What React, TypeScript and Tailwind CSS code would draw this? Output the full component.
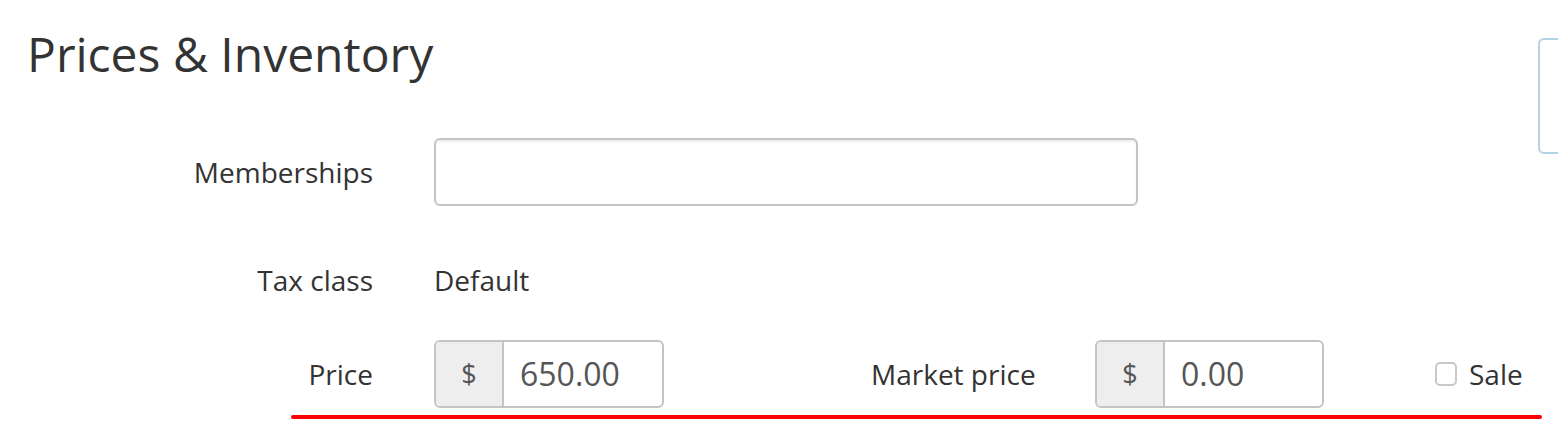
export default function App() {
  return (
    <div
      className="relative h-[438px] w-[1558px] overflow-hidden bg-white text-[#333]"
      style={{ fontFamily: '"Open Sans", sans-serif' }}
    >
      {/* side panel edge */}
      <div className="absolute left-[1538px] top-[38px] h-[116px] w-[60px] rounded-[6px] border-2 border-[#b3d5e6]" />

      <h1 className="pl-[27px] pt-[22px] text-[48px] font-normal leading-[64px] text-[#333]">
        Prices &amp; Inventory
      </h1>

      <div className="mt-[52px] flex items-center">
        <label className="w-[373px] text-right text-[28px] leading-[36px]">Memberships</label>
        <div className="ml-[61px] h-[68px] w-[704px] rounded-[6px] border-2 border-[#c4c4c4] bg-white shadow-[inset_0_2px_2px_rgba(0,0,0,0.07)]" />
      </div>

      <div className="mt-[56px] flex h-[36px] items-center">
        <label className="w-[373px] text-right text-[28px] leading-[36px]">Tax class</label>
        <span className="ml-[61px] text-[28px] leading-[36px]">Default</span>
      </div>

      <div className="mt-[42px] flex items-center">
        <label className="w-[373px] text-right text-[28px] leading-[36px]">Price</label>
        <div className="ml-[61px] flex h-[68px] w-[230px] overflow-hidden rounded-[6px] border-2 border-[#c4c4c4]">
          <span className="flex w-[68px] items-center justify-center border-r-2 border-[#c4c4c4] bg-[#eeeeee] text-[27px] text-[#555]">
            $
          </span>
          <span className="flex flex-1 items-center pl-[16px] text-[32px] text-[#555]">650.00</span>
        </div>
        <label className="ml-[207px] w-[163px] whitespace-nowrap text-right text-[28px] leading-[36px]">
          Market price
        </label>
        <div className="ml-[61px] flex h-[68px] w-[229px] overflow-hidden rounded-[6px] border-2 border-[#c4c4c4]">
          <span className="flex w-[68px] items-center justify-center border-r-2 border-[#c4c4c4] bg-[#eeeeee] text-[27px] text-[#555]">
            $
          </span>
          <span className="flex flex-1 items-center pl-[16px] text-[32px] text-[#555]">0.00</span>
        </div>
        <label className="ml-[111px] flex items-center gap-[12px] text-[28px] leading-[36px]">
          <span className="h-[24px] w-[22px] rounded-[5px] border-2 border-[#c8c8c8] bg-white" />
          Sale
        </label>
      </div>

      {/* red underline annotation */}
      <div className="absolute left-[291px] top-[415px] h-[4px] w-[1251px] rounded-full bg-[#f00]" />
    </div>
  );
}
